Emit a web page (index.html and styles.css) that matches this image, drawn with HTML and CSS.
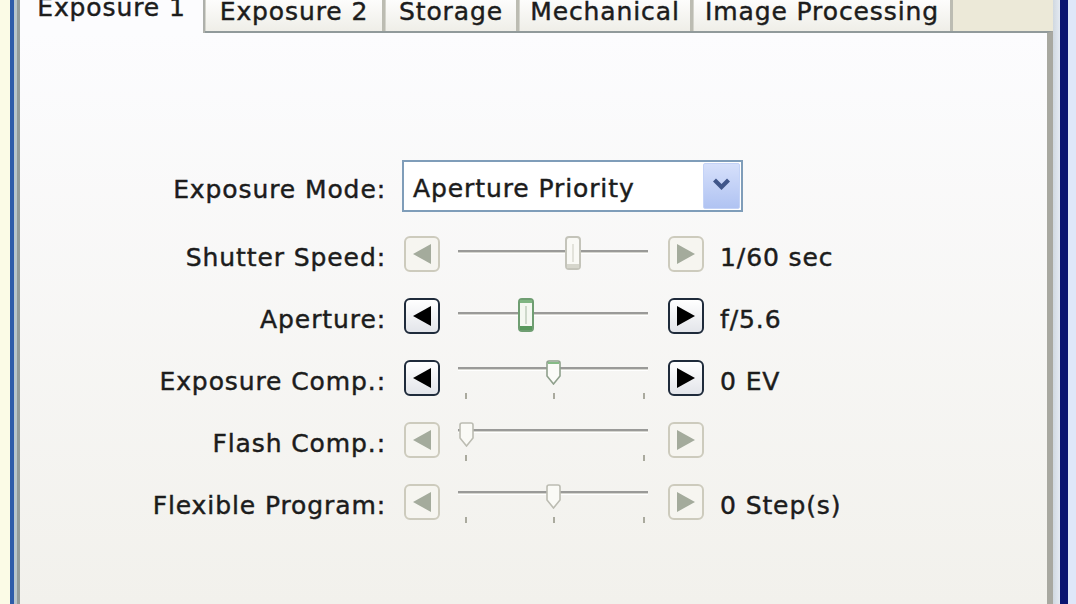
FILE: index.html
```html
<!DOCTYPE html>
<html>
<head>
<meta charset="utf-8">
<title>Camera Control</title>
<link rel="stylesheet" href="styles.css">
</head>
<body>
<div class="screen">
  <div class="edge-left">
    <div class="cream"></div>
    <div class="blue"></div>
    <div class="lite"></div>
  </div>
  <div class="dialog">
    <div class="tabs">
      <div class="tab active w1">Exposure 1</div>
      <div class="tab w2">Exposure 2</div>
      <div class="tab w3">Storage</div>
      <div class="tab w4">Mechanical</div>
      <div class="tab w5">Image Processing</div>
      <div class="tab-fill"></div>
    </div>
    <div class="panel">
      <div class="form">
        <div class="row mode-row">
          <div class="label">Exposure Mode:</div>
          <div class="select">
            <span class="select-text">Aperture Priority</span>
            <div class="drop">
              <svg width="35" height="44" viewBox="0 0 35 44"><polyline points="10.5,16 17.5,23 24.5,16" fill="none" stroke="#40568a" stroke-width="4.2" stroke-linejoin="miter"/></svg>
            </div>
          </div>
        </div>

        <div class="row">
          <div class="label">Shutter Speed:</div>
          <div class="btn off"><svg width="32" height="32" viewBox="0 0 32 32"><path d="M7 16 L25 6 V26 Z"/></svg></div>
          <div class="slider">
            <div class="track plain"></div>
            <svg class="thumb" style="left:107px" width="16" height="34" viewBox="0 0 16 34"><rect x="1" y="1" width="14" height="32" rx="3" fill="#f9f9f5" stroke="#c4c4ba" stroke-width="2"/><line x1="8" y1="8" x2="8" y2="26" stroke="#e2e2da" stroke-width="2"/><rect x="2" y="28" width="12" height="4" fill="#d6d6cc"/></svg>
          </div>
          <div class="btn off"><svg width="32" height="32" viewBox="0 0 32 32"><path d="M7 6 L25 16 L7 26 Z"/></svg></div>
          <span class="value">1/60 sec</span>
        </div>

        <div class="row">
          <div class="label">Aperture:</div>
          <div class="btn on"><svg width="32" height="32" viewBox="0 0 32 32"><path d="M7 16 L25 6 V26 Z"/></svg></div>
          <div class="slider">
            <div class="track plain"></div>
            <svg class="thumb" style="left:60px" width="16" height="34" viewBox="0 0 16 34"><rect x="1" y="1" width="14" height="32" rx="3" fill="#f4f8f1" stroke="#6f9e72" stroke-width="2"/><line x1="8" y1="8" x2="8" y2="26" stroke="#cdd8ca" stroke-width="2"/><rect x="2" y="28" width="12" height="4" fill="#58985c"/><rect x="2" y="2" width="12" height="3" fill="#7fb582"/></svg>
          </div>
          <div class="btn on"><svg width="32" height="32" viewBox="0 0 32 32"><path d="M7 6 L25 16 L7 26 Z"/></svg></div>
          <span class="value">f/5.6</span>
        </div>

        <div class="row">
          <div class="label">Exposure Comp.:</div>
          <div class="btn on"><svg width="32" height="32" viewBox="0 0 32 32"><path d="M7 16 L25 6 V26 Z"/></svg></div>
          <div class="slider">
            <div class="track ticked"></div>
            <svg class="thumb" style="left:88px" width="15" height="25" viewBox="0 0 15 25"><path d="M3 1 H12 Q14 1 14 3 V16 L7.5 24 L1 16 V3 Q1 1 3 1 Z" fill="#fbfbf8" stroke="#8fa08c" stroke-width="1.6"/><rect x="2" y="2" width="11" height="2" fill="#86bb86"/></svg>
            <div class="tick" style="left:7px"></div>
            <div class="tick" style="left:95px"></div>
            <div class="tick" style="left:185px"></div>
          </div>
          <div class="btn on"><svg width="32" height="32" viewBox="0 0 32 32"><path d="M7 6 L25 16 L7 26 Z"/></svg></div>
          <span class="value">0 EV</span>
        </div>

        <div class="row">
          <div class="label">Flash Comp.:</div>
          <div class="btn off"><svg width="32" height="32" viewBox="0 0 32 32"><path d="M7 16 L25 6 V26 Z"/></svg></div>
          <div class="slider">
            <div class="track ticked"></div>
            <svg class="thumb" style="left:1px" width="15" height="25" viewBox="0 0 15 25"><path d="M3 1 H12 Q14 1 14 3 V16 L7.5 24 L1 16 V3 Q1 1 3 1 Z" fill="#fafaf6" stroke="#bcbcb2" stroke-width="1.6"/></svg>
            <div class="tick" style="left:7px"></div>
            <div class="tick" style="left:185px"></div>
          </div>
          <div class="btn off"><svg width="32" height="32" viewBox="0 0 32 32"><path d="M7 6 L25 16 L7 26 Z"/></svg></div>
          <span class="value"></span>
        </div>

        <div class="row">
          <div class="label">Flexible Program:</div>
          <div class="btn off"><svg width="32" height="32" viewBox="0 0 32 32"><path d="M7 16 L25 6 V26 Z"/></svg></div>
          <div class="slider">
            <div class="track ticked"></div>
            <svg class="thumb" style="left:88px" width="15" height="25" viewBox="0 0 15 25"><path d="M3 1 H12 Q14 1 14 3 V16 L7.5 24 L1 16 V3 Q1 1 3 1 Z" fill="#fafaf6" stroke="#bcbcb2" stroke-width="1.6"/></svg>
            <div class="tick" style="left:7px"></div>
            <div class="tick" style="left:95px"></div>
            <div class="tick" style="left:185px"></div>
          </div>
          <div class="btn off"><svg width="32" height="32" viewBox="0 0 32 32"><path d="M7 6 L25 16 L7 26 Z"/></svg></div>
          <span class="value">0 Step(s)</span>
        </div>
      </div>
    </div>
  </div>
  <div class="edge-right">
    <div class="r-lite"></div>
    <div class="r-navy"></div>
    <div class="r-sky"></div>
  </div>
</div>
</body>
</html>
```
FILE: styles.css
```css
* {
  box-sizing: border-box;
  margin: 0;
  padding: 0;
}

html, body {
  width: 1076px;
  height: 604px;
  overflow: hidden;
}

body {
  font-family: "DejaVu Sans", Verdana, sans-serif;
  font-size: 25px;
  letter-spacing: 0.9px;
  color: #1c1c1c;
  -webkit-text-stroke: 0.45px #1c1c1c;
  background: #fbfbe7;
}

.screen {
  display: flex;
  width: 1076px;
  height: 604px;
}

/* window frame strips */
.edge-left,
.edge-right {
  display: flex;
  flex: none;
}

.cream { width: 10px; background: #fbfbe6; }
.blue { width: 4px; background: #2f5ca9; }
.lite { width: 3px; background: #b9c6cc; }

.r-lite { width: 7px; background: linear-gradient(to right, #d0d8e0, #e4eaf2); }
.r-navy { width: 8px; background: #0b1470; }
.r-sky { width: 8px; background: #dfe7f9; }

.dialog {
  width: 1036px;
  display: flex;
  flex-direction: column;
  background: #ece9d8;
}

/* tabs */
.tabs {
  display: flex;
  height: 31px;
  flex: none;
}

.tab {
  height: 31px;
  line-height: 23px;
  text-align: center;
  white-space: nowrap;
  overflow: hidden;
  background: linear-gradient(#fdfdfc, #efeee8);
  border-left: 1px solid #d4d4cc;
  border-right: 3px solid #bcbcb2;
}

.tab.active {
  height: 33px;
  margin-bottom: -2px;
  line-height: 15px;
  background: #fcfcfe;
  border-left: 3px solid #959c99;
  border-right: 2px solid #aeb0ab;
  position: relative;
  z-index: 1;
}

.w1 { width: 188px; }
.w2 { width: 180px; }
.w3 { width: 134px; }
.w4 { width: 174px; }
.w5 { width: 260px; }

.tab-fill {
  flex: 1;
  background: #ece9d8;
}

/* panel */
.panel {
  flex: 1;
  border-top: 2px solid #919a9b;
  border-left: 3px solid #959c99;
  border-right: 6px solid #a8a8a0;
  background: linear-gradient(#fcfcfe, #f2f1ec);
}

.form {
  padding-top: 127px;
}

.row {
  display: flex;
  align-items: center;
  height: 62px;
}

.mode-row {
  height: 52px;
  margin-bottom: 11px;
}

.label {
  width: 366px;
  flex: none;
  text-align: right;
  margin-right: 16px;
  padding-top: 6px;
  white-space: nowrap;
}

/* combo box */
.select {
  width: 341px;
  height: 52px;
  flex: none;
  border: 2px solid #7f9db9;
  background: #ffffff;
  padding: 1px;
  display: flex;
  align-items: center;
  justify-content: space-between;
}

.select-text {
  padding-left: 8px;
  padding-top: 4px;
}

.drop {
  width: 37px;
  height: 46px;
  border: 1px solid #c4d3f7;
  border-radius: 2px;
  background: linear-gradient(#d6e0fb, #b0c3f2);
}

.drop svg {
  display: block;
}

/* arrow buttons */
.btn {
  width: 36px;
  height: 36px;
  flex: none;
  border-radius: 6px;
  margin-left: 2px;
}

.btn + .slider + .btn {
  margin-left: 20px;
}

.btn svg {
  display: block;
}

.btn.on {
  border: 2px solid #1f2b3b;
  background: linear-gradient(#ffffff, #e3e5ea);
}

.btn.on svg {
  fill: #000000;
}

.btn.off {
  border: 2px solid #cdcbbd;
  background: #f6f5f0;
}

.btn.off svg {
  fill: #a4ab9c;
}

/* track bars */
.slider {
  position: relative;
  width: 190px;
  height: 36px;
  flex: none;
  margin-left: 18px;
}

.track {
  position: absolute;
  left: 0;
  width: 190px;
  height: 4px;
  border-top: 2px solid #9a9a98;
  border-bottom: 1px solid #ffffff;
  background: #d6d6d0;
}

.track.plain { top: 14px; }
.track.ticked { top: 7px; }

.thumb {
  position: absolute;
  top: 0;
  display: block;
}

.tick {
  position: absolute;
  top: 33px;
  width: 2px;
  height: 6px;
  background: #aaaa9e;
}

.value {
  margin-left: 16px;
  padding-top: 6px;
  white-space: nowrap;
}
```
